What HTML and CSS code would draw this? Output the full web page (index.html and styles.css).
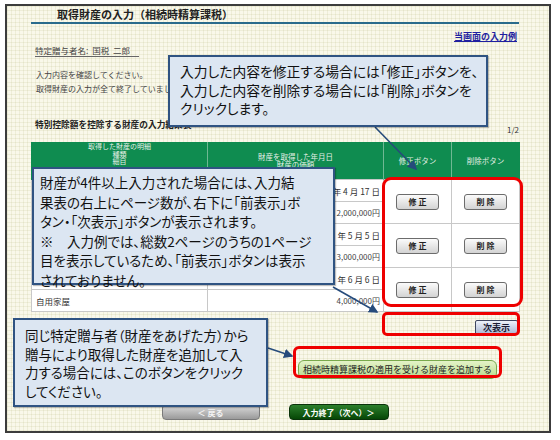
FILE: index.html
```html
<!DOCTYPE html>
<html lang="ja">
<head>
<meta charset="utf-8">
<title>取得財産の入力（相続時精算課税）</title>
<link rel="stylesheet" href="styles.css">
</head>
<body>
<div class="frame">
  <div class="content">
    <h1 class="title">取得財産の入力（相続時精算課税）</h1>
    <div class="link-row"><a class="example-link">当画面の入力例</a></div>
    <div class="donor"><span class="donor-name">特定贈与者名:&nbsp;&nbsp;国税&nbsp;&nbsp;二郎</span></div>
    <p class="note note-first">入力内容を確認してください。</p>
    <p class="note">取得財産の入力が全て終了していましたら</p>
    <div class="result-head">
      <h2 class="result-title">特別控除額を控除する財産の入力結果表</h2>
      <span class="page-count">1/2</span>
    </div>
    <table class="result">
      <colgroup>
        <col class="c-item"><col class="c-date"><col class="c-btn"><col class="c-btn">
      </colgroup>
      <thead>
        <tr>
          <th class="h-item">取得した財産の明細<br>種類<br>細目</th>
          <th class="h-date">財産を取得した年月日<br>財産の価額</th>
          <th>修正ボタン</th>
          <th>削除ボタン</th>
        </tr>
      </thead>
      <tbody>
        <tr>
          <td class="item"></td>
          <td class="num">年 4 月 17 日</td>
          <td class="act" rowspan="2"><button class="btn-row">修 正</button></td>
          <td class="act" rowspan="2"><button class="btn-row">削 除</button></td>
        </tr>
        <tr class="sub">
          <td class="item"></td>
          <td class="num amount">2,000,000円</td>
        </tr>
        <tr>
          <td class="item"></td>
          <td class="num">年 5 月 5 日</td>
          <td class="act" rowspan="2"><button class="btn-row">修 正</button></td>
          <td class="act" rowspan="2"><button class="btn-row">削 除</button></td>
        </tr>
        <tr class="sub">
          <td class="item"></td>
          <td class="num amount">3,000,000円</td>
        </tr>
        <tr>
          <td class="item"></td>
          <td class="num">年 6 月 6 日</td>
          <td class="act" rowspan="2"><button class="btn-row">修 正</button></td>
          <td class="act" rowspan="2"><button class="btn-row">削 除</button></td>
        </tr>
        <tr class="sub">
          <td class="item">自用家屋</td>
          <td class="num amount">4,000,000円</td>
        </tr>
      </tbody>
    </table>
    <div class="next-row"><button class="btn-next">次表示</button></div>
    <div class="add-row"><button class="btn-add">相続時精算課税の適用を受ける財産を追加する</button></div>
    <div class="nav-row">
      <button class="btn-back">＜ 戻る</button>
      <button class="btn-finish">入力終了（次へ）＞</button>
    </div>
  </div>

  <div class="mark mark-rows"></div>
  <div class="mark mark-next"></div>
  <div class="mark mark-add"></div>

  <svg class="arrows" width="542" height="425" viewBox="0 0 542 425">
    <defs>
      <marker id="ah" markerWidth="6" markerHeight="6" refX="5" refY="3" orient="auto" markerUnits="strokeWidth">
        <path d="M0,0 L6,3 L0,6 Z" fill="#264b7b"/>
      </marker>
    </defs>
    <line x1="368" y1="121" x2="409" y2="163" stroke="#264b7b" stroke-width="1.6" marker-end="url(#ah)"/>
    <line x1="326" y1="281" x2="370" y2="306" stroke="#264b7b" stroke-width="1.6" marker-end="url(#ah)"/>
    <line x1="261" y1="342" x2="285" y2="350" stroke="#264b7b" stroke-width="1.6" marker-end="url(#ah)"/>
  </svg>

  <div class="callout callout-edit">入力した内容を修正する場合には「修正」ボタンを、<br>入力した内容を削除する場合には「削除」ボタンを<br>クリックします。</div>
  <div class="callout callout-page">財産が4件以上入力された場合には、入力結<br>果表の右上にページ数が、右下に「前表示」ボ<br>タン・「次表示」ボタンが表示されます。<br>※　入力例では、総数2ページのうちの1ページ<br>目を表示しているため、「前表示」ボタンは表示<br>されておりません。</div>
  <div class="callout callout-add">同じ特定贈与者（財産をあげた方）から<br>贈与により取得した財産を追加して入<br>力する場合には、このボタンをクリック<br>してください。</div>
</div>
</body>
</html>
```

FILE: styles.css
```css
html, body {
  margin: 0;
  padding: 0;
  background: #ffffff;
}
body {
  width: 560px;
  height: 440px;
  overflow: hidden;
  font-family: "Noto Sans CJK JP", "Noto Sans", "Liberation Sans", sans-serif;
  color: #222;
}
.frame {
  position: relative;
  box-sizing: border-box;
  width: 546px;
  height: 429px;
  margin: 4px 0 0 5px;
  border: 2px solid #3c3c3c;
  background-color: #f9f8ea;
  background-image:
    linear-gradient(rgba(200, 196, 150, 0.22) 1px, transparent 1px),
    linear-gradient(90deg, rgba(200, 196, 150, 0.22) 1px, transparent 1px);
  background-size: 4px 4px;
  overflow: hidden;
}
.content {
  padding: 0 30px 0 24px;
}
.title {
  margin: 0;
  height: 16px;
  padding-left: 26px;
  font-size: 11px;
  line-height: 16px;
  font-weight: bold;
  color: #222;
  border-bottom: 2px solid #2a6b8c;
}
.link-row {
  margin-top: 3px;
  height: 12px;
  line-height: 12px;
  text-align: right;
  padding-right: 2px;
}
.example-link {
  font-size: 9px;
  font-weight: bold;
  color: #1f1fa0;
  text-decoration: underline;
}
.donor {
  margin-top: 2px;
  height: 12px;
  line-height: 12px;
  padding-left: 4px;
}
.donor-name {
  display: inline-block;
  font-size: 8.5px;
  line-height: 11px;
  color: #444;
  padding-right: 9px;
  border-bottom: 1px solid #666;
}
.note {
  margin: 0;
  height: 14px;
  padding-left: 5px;
  font-size: 8px;
  line-height: 14px;
  color: #444;
  white-space: nowrap;
}
.note-first {
  margin-top: 15px;
}
.result-head {
  display: flex;
  justify-content: space-between;
  align-items: flex-end;
  height: 18px;
  margin-top: 22px;
  padding-left: 4px;
}
.result-title {
  margin: 0;
  font-size: 8.7px;
  line-height: 14px;
  font-weight: bold;
  color: #222;
  align-self: flex-start;
}
.page-count {
  font-size: 8px;
  line-height: 12px;
  color: #333;
}
.result {
  margin-top: 6px;
  width: 488px;
  table-layout: fixed;
  border-collapse: collapse;
  background: #ffffff;
}
.c-item, .c-date { width: 176px; }
.c-btn { width: 68px; }
.result th {
  height: 36px;
  padding: 0;
  background: #0f8c50;
  color: #e4efe6;
  font-weight: normal;
  font-size: 7.5px;
  line-height: 8px;
  text-align: center;
  vertical-align: middle;
  border-left: 1px solid #6fb893;
  border-right: 1px solid #6fb893;
}
.result th:first-child { border-left: 1px solid #0f8c50; }
.result th:last-child { border-right: 1px solid #0f8c50; }
.result th.h-item {
  vertical-align: top;
  padding-top: 1px;
  font-size: 7px;
  line-height: 7.5px;
}
.result td {
  height: 21px;
  padding: 0 3px 0 4px;
  font-size: 8.5px;
  line-height: 12px;
  color: #333;
  border: 1px solid #c8c8c8;
  white-space: nowrap;
  overflow: hidden;
}
.result td.num { text-align: right; }
.result td.amount { font-size: 8px; color: #444; }
.result td.act { text-align: center; padding: 0; }
.btn-row {
  box-sizing: border-box;
  width: 43px;
  height: 16px;
  padding: 0;
  font-family: inherit;
  font-size: 8px;
  font-weight: bold;
  color: #222;
  background: linear-gradient(#fbfbfb, #d3d3d3);
  border: 1px solid #6c6c6c;
  border-radius: 3px;
}
.next-row {
  display: flex;
  justify-content: flex-end;
  margin-top: 8px;
  height: 14px;
  padding-right: 1px;
}
.btn-next {
  box-sizing: border-box;
  width: 43px;
  height: 15px;
  padding: 0;
  font-family: inherit;
  font-size: 9px;
  font-weight: bold;
  color: #1a1a33;
  background: linear-gradient(#eef2fa, #aab7d3);
  border: 1px solid #3f4660;
  border-radius: 2px;
}
.add-row {
  margin-top: 20px;
  height: 19px;
  padding-left: 267px;
}
.btn-add {
  box-sizing: border-box;
  width: 199px;
  height: 19px;
  padding: 0;
  font-family: inherit;
  font-size: 9px;
  color: #222;
  background: linear-gradient(#e4f3c8, #b9dc8c);
  border: 1px solid #79a94c;
  border-radius: 6px;
}
.nav-row {
  display: flex;
  justify-content: center;
  gap: 29px;
  margin-top: 31px;
  height: 16px;
}
.btn-back {
  box-sizing: border-box;
  width: 98px;
  height: 16px;
  padding: 0;
  font-family: inherit;
  font-size: 8px;
  font-weight: bold;
  color: #f4f4f4;
  background: linear-gradient(#dcdcdc, #9a9a9a);
  border: 1px solid #7a7a7a;
  border-radius: 4px;
}
.btn-finish {
  box-sizing: border-box;
  width: 100px;
  height: 16px;
  padding: 0;
  font-family: inherit;
  font-size: 8px;
  font-weight: bold;
  color: #ffffff;
  background: linear-gradient(#2c7f2c, #064706);
  border: 1px solid #0b330b;
  border-radius: 4px;
}
.mark {
  position: absolute;
  box-sizing: border-box;
  border: 3px solid #ee0000;
}
.mark-rows {
  left: 375px;
  top: 171px;
  width: 141px;
  height: 130px;
  border-radius: 9px;
}
.mark-next {
  left: 375px;
  top: 306px;
  width: 138px;
  height: 24px;
  border-radius: 5px;
}
.mark-add {
  left: 286px;
  top: 340px;
  width: 209px;
  height: 32px;
  border-radius: 6px;
}
.arrows {
  position: absolute;
  left: 0;
  top: 0;
}
.callout {
  position: absolute;
  box-sizing: border-box;
  background: #dce6f2;
  border: 2px solid #2f5382;
  box-shadow: 1px 1px 1px rgba(0, 0, 0, 0.25);
  color: #111;
  font-size: 13.5px;
  font-feature-settings: "palt";
  white-space: nowrap;
}
.callout-edit {
  left: 161px;
  top: 49px;
  width: 320px;
  height: 72px;
  padding: 5px 0 0 10px;
  line-height: 18.5px;
  font-size: 13.8px;
}
.callout-page {
  left: 25px;
  top: 161px;
  width: 303px;
  height: 118px;
  padding: 4px 0 0 6px;
  line-height: 19.5px;
}
.callout-add {
  left: 6px;
  top: 312px;
  width: 255px;
  height: 89px;
  padding: 6px 0 0 10px;
  line-height: 18.5px;
}
```
